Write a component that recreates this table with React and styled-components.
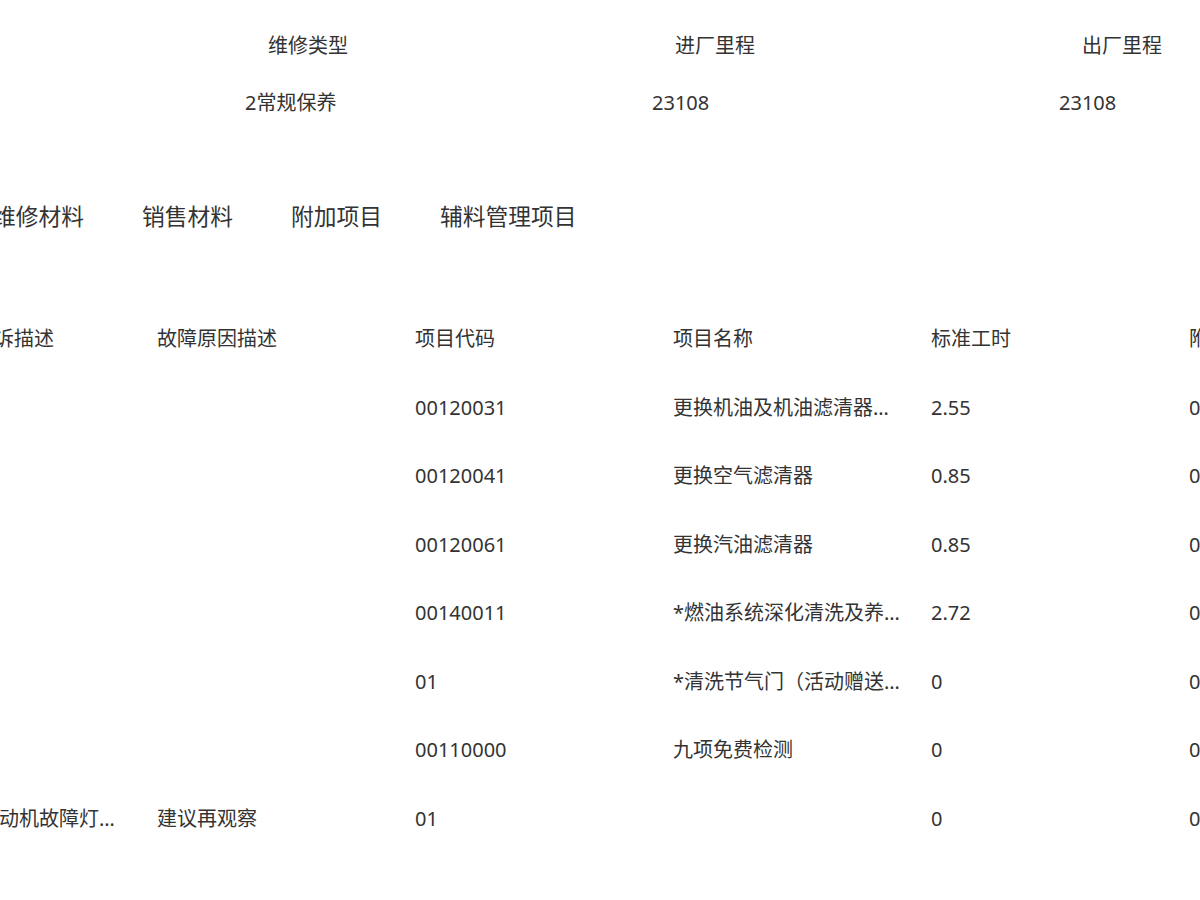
import React from "react";
import styled, { createGlobalStyle } from "styled-components";

const GlobalStyle = createGlobalStyle`
  html, body {
    margin: 0;
    padding: 0;
    background: #ffffff;
  }
  body {
    font-family: "Noto Sans", "Noto Sans CJK SC", sans-serif;
    color: #333333;
    overflow: hidden;
  }
`;

const Viewport = styled.div`
  width: 1200px;
  height: 900px;
  overflow: hidden;
  background: #ffffff;
  padding-top: 32px;
  box-sizing: border-box;
`;

const InfoGrid = styled.div`
  display: grid;
  grid-template-columns: repeat(3, 407px);
  row-gap: 29px;
  margin-left: 245px;
  font-size: 20px;
  line-height: 28px;
`;

const InfoLabel = styled.div`
  padding-left: 23px;
  white-space: nowrap;
`;

const InfoValue = styled.div`
  white-space: nowrap;
`;

const Tabs = styled.div`
  display: flex;
  gap: 58px;
  margin-top: 84px;
  margin-left: -7px;
  font-size: 22.75px;
  line-height: 32px;
`;

const Tab = styled.div`
  white-space: nowrap;
  cursor: pointer;
`;

const Table = styled.div`
  margin-top: 72px;
  margin-left: -101px;
  font-size: 20px;
  line-height: 28px;
`;

const Row = styled.div`
  display: grid;
  grid-template-columns: repeat(6, 258px);
  height: 68.5px;
  align-items: center;
`;

const Cell = styled.div`
  padding-right: 28px;
  overflow: hidden;
  white-space: nowrap;
  text-overflow: ellipsis;
`;

const HeadCell = styled(Cell)`
  text-indent: ${(p) => p.$indent || 0}px;
`;

const headers = ["客户故障主诉描述", "故障原因描述", "项目代码", "项目名称", "标准工时", "附加工时"];

const rows = [
  ["", "", "00120031", "更换机油及机油滤清器（含工时）", "2.55", "0"],
  ["", "", "00120041", "更换空气滤清器", "0.85", "0"],
  ["", "", "00120061", "更换汽油滤清器", "0.85", "0"],
  ["", "", "00140011", "*燃油系统深化清洗及养护（套餐）", "2.72", "0"],
  ["", "", "01", "*清洗节气门（活动赠送项目）", "0", "0"],
  ["", "", "00110000", "九项免费检测", "0", "0"],
  ["仪表显示发动机故障灯亮起", "建议再观察", "01", "", "0", "0"],
];

export default function App() {
  return (
    <>
      <GlobalStyle />
      <Viewport>
        <InfoGrid>
          <InfoLabel>维修类型</InfoLabel>
          <InfoLabel>进厂里程</InfoLabel>
          <InfoLabel>出厂里程</InfoLabel>
          <InfoValue>2常规保养</InfoValue>
          <InfoValue>23108</InfoValue>
          <InfoValue>23108</InfoValue>
        </InfoGrid>
        <Tabs>
          <Tab>维修材料</Tab>
          <Tab>销售材料</Tab>
          <Tab>附加项目</Tab>
          <Tab>辅料管理项目</Tab>
        </Tabs>
        <Table>
          <Row>
            {headers.map((h, i) => (
              <HeadCell key={h} $indent={i === 0 ? -5 : 0}>{h}</HeadCell>
            ))}
          </Row>
          {rows.map((r, i) => (
            <Row key={i}>
              {r.map((c, j) => (
                <Cell key={j}>{c}</Cell>
              ))}
            </Row>
          ))}
        </Table>
      </Viewport>
    </>
  );
}
